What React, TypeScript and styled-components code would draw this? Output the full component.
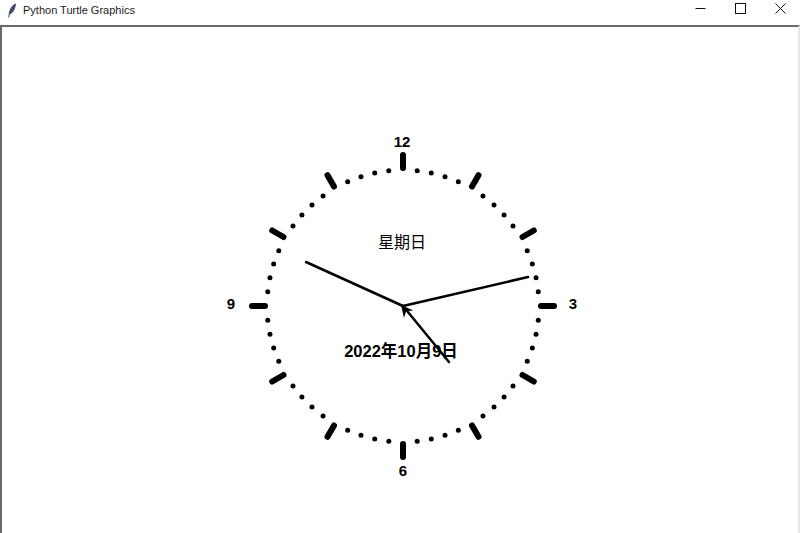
import React from 'react';
import styled, { createGlobalStyle } from 'styled-components';

const GlobalStyle = createGlobalStyle`
  html, body {
    margin: 0;
    padding: 0;
    background: #ffffff;
    overflow: hidden;
  }
`;

const Window = styled.div`
  width: 800px;
  height: 533px;
  display: flex;
  flex-direction: column;
  background: #ffffff;
  overflow: hidden;
  font-family: "Liberation Sans", Arial, sans-serif;
`;

const TitleBar = styled.div`
  height: 25px;
  flex: none;
  display: flex;
  align-items: center;
  background: #ffffff;
  padding-left: 7px;
  box-sizing: border-box;
`;

const TitleText = styled.span`
  font-size: 11px;
  color: #1a1a1a;
  margin-left: 6px;
  margin-top: -5px;
`;

const Controls = styled.div`
  margin-left: auto;
  display: flex;
  height: 100%;
`;

const ControlButton = styled.div`
  width: 40px;
  height: 20px;
  display: flex;
  align-items: center;
  justify-content: center;
  margin-top: -2px;
`;

const Canvas = styled.div`
  flex: none;
  height: 520px;
  border-top: 2px solid #6a6a6a;
  border-left: 2px solid #6a6a6a;
  border-right: 2px solid #e6e6e6;
  border-bottom: 2px solid #e6e6e6;
  background: #ffffff;
  overflow: hidden;
`;

const ClockSvg = styled.svg`
  display: block;
`;

const Feather = () => (
  <svg width="10" height="15" viewBox="0 0 10 15" style={{ marginTop: -4 }}>
    <path d="M9 0.5 C5.5 1.6 2.5 5.4 1.8 10.5 L1.2 14.4 L2.1 14.4 L2.7 11.6 C6.6 9.8 8.8 5.2 9 0.5 Z" fill="#3f4c68" />
  </svg>
);

const CX = 403;
const CY = 306;

const ticks = Array.from({ length: 60 }, (_, i) => {
  const a = (i * 6 * Math.PI) / 180;
  return { i, s: Math.sin(a), c: Math.cos(a) };
});

const labels = [
  { t: '12', x: 402, y: 147 },
  { t: '3', x: 573, y: 309 },
  { t: '6', x: 403, y: 476 },
  { t: '9', x: 231, y: 309 },
];

const Clock = () => {
  // arrow turtle at center, pointing away from the second hand
  const dx = -46, dy = -56;
  const len = Math.hypot(dx, dy);
  const ux = dx / len, uy = dy / len;
  const tipX = 401, tipY = 305;
  const bx = tipX - ux * 12, by = tipY - uy * 12;
  const px = -uy * 6, py = ux * 6;
  const nx = tipX - ux * 8, ny = tipY - uy * 8;
  const arrow = `${tipX},${tipY} ${bx + px},${by + py} ${nx},${ny} ${bx - px},${by - py}`;

  return (
    <ClockSvg width={796} height={520} viewBox="2 27 796 520">
      {ticks.map(({ i, s, c }) =>
        i % 5 === 0 ? (
          <line
            key={i}
            x1={CX + s * 138}
            y1={CY - c * 138}
            x2={CX + s * 151}
            y2={CY - c * 151}
            stroke="#000"
            strokeWidth={6}
            strokeLinecap="round"
          />
        ) : (
          <circle key={i} cx={CX + s * 136} cy={CY - c * 136} r={2.5} fill="#000" />
        )
      )}
      {labels.map(l => (
        <text
          key={l.t}
          x={l.x}
          y={l.y}
          textAnchor="middle"
          fontFamily='"Liberation Sans", Arial, sans-serif'
          fontWeight="bold"
          fontSize="15"
          fill="#000"
        >
          {l.t}
        </text>
      ))}
      <text
        x={402}
        y={248}
        textAnchor="middle"
        fontFamily='"Noto Sans CJK SC", sans-serif'
        fontSize="16"
        fill="#000"
      >
        星期日
      </text>
      <line x1={CX} y1={CY} x2={306} y2={262} stroke="#000" strokeWidth={2.5} strokeLinecap="round" />
      <line x1={CX} y1={CY} x2={528} y2={277} stroke="#000" strokeWidth={2.5} strokeLinecap="round" />
      <line x1={CX} y1={CY} x2={449} y2={362} stroke="#000" strokeWidth={2.5} strokeLinecap="round" />
      <text
        x={401}
        y={357}
        textAnchor="middle"
        fontFamily='"Liberation Sans", "Noto Sans CJK SC", sans-serif'
        fontWeight="bold"
        fontSize="16.5"
        fill="#000"
      >
        2022年10月9日
      </text>
      <polygon points={arrow} fill="#000" />
    </ClockSvg>
  );
};

export default function App() {
  return (
    <>
      <GlobalStyle />
      <Window>
        <TitleBar>
          <Feather />
          <TitleText>Python Turtle Graphics</TitleText>
          <Controls>
            <ControlButton>
              <svg width="11" height="11" viewBox="0 0 11 11">
                <line x1="0.5" y1="5.5" x2="10.5" y2="5.5" stroke="#111" strokeWidth="1" />
              </svg>
            </ControlButton>
            <ControlButton>
              <svg width="11" height="11" viewBox="0 0 11 11">
                <rect x="0.5" y="0.5" width="10" height="10" fill="none" stroke="#111" strokeWidth="1" />
              </svg>
            </ControlButton>
            <ControlButton>
              <svg width="11" height="11" viewBox="0 0 11 11">
                <path d="M0.5 0.5 L10.5 10.5 M10.5 0.5 L0.5 10.5" stroke="#111" strokeWidth="1" />
              </svg>
            </ControlButton>
          </Controls>
        </TitleBar>
        <Canvas>
          <Clock />
        </Canvas>
      </Window>
    </>
  );
}
